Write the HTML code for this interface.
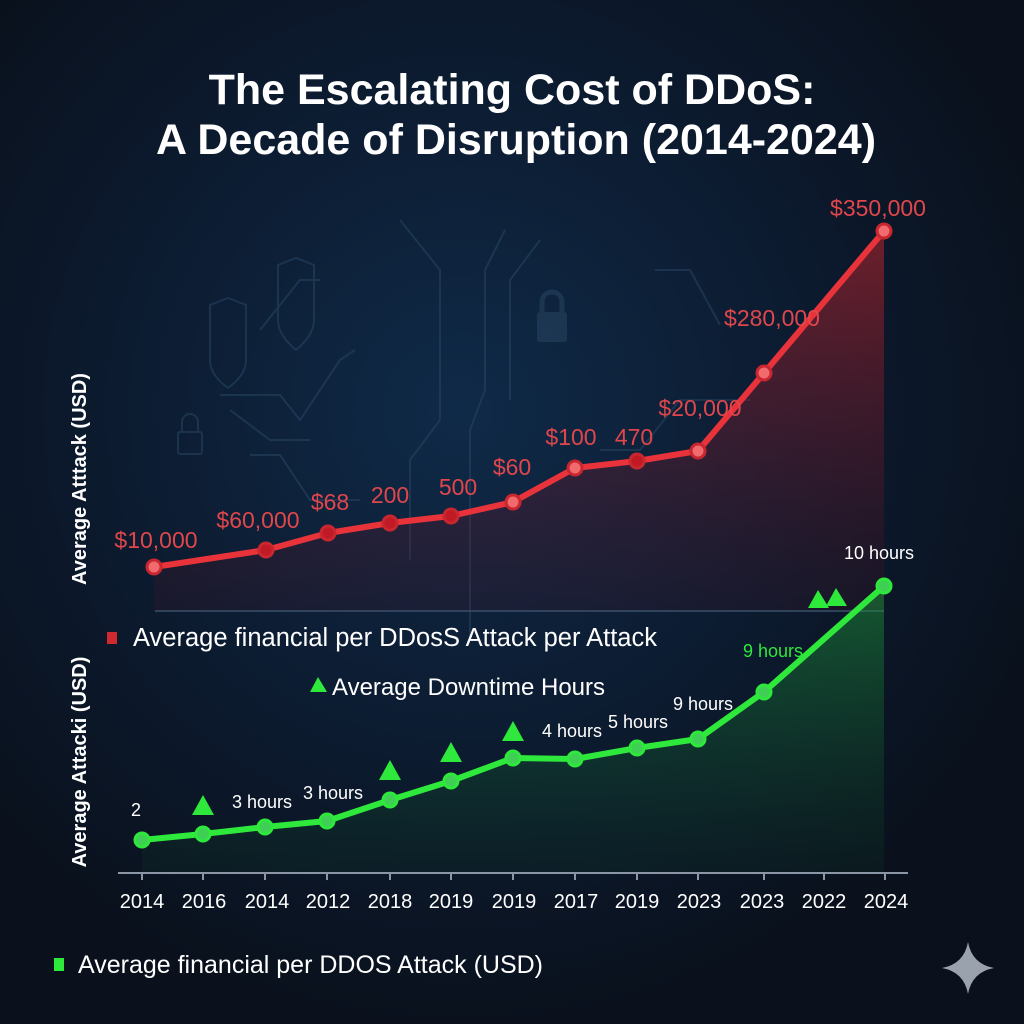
<!DOCTYPE html>
<html><head><meta charset="utf-8"><style>
html,body{margin:0;padding:0;background:#0a1220;}
svg{display:block}
text{font-family:"Liberation Sans",sans-serif}
</style></head><body>
<svg width="1024" height="1024" viewBox="0 0 1024 1024" xmlns="http://www.w3.org/2000/svg">
<defs>
<radialGradient id="bg" cx="0.45" cy="0.4" r="0.6">
<stop offset="0" stop-color="#0f2a48"/><stop offset="0.6" stop-color="#0c1a2e"/><stop offset="1" stop-color="#0a111d"/>
</radialGradient>
<linearGradient id="rf" x1="0" y1="0" x2="0" y2="1"><stop offset="0" stop-color="#c0262e" stop-opacity="0.55"/><stop offset="1" stop-color="#5a1020" stop-opacity="0.15"/></linearGradient>
<linearGradient id="gf" x1="0" y1="0" x2="0" y2="1"><stop offset="0" stop-color="#1f9a3a" stop-opacity="0.5"/><stop offset="1" stop-color="#0d3a24" stop-opacity="0.2"/></linearGradient>
</defs>
<rect width="1024" height="1024" fill="url(#bg)"/>
<g stroke="#2a4866" stroke-width="2" fill="none" opacity="0.5">
<path d="M400 220 L440 270 L440 420 L410 460 L410 560"/><path d="M505 230 L485 270 L485 390 L470 430 L470 640"/><path d="M540 240 L510 280 L510 400"/><path d="M260 330 L300 280 L320 280"/><path d="M220 395 L280 395 L300 420 L340 360 L355 350"/><path d="M230 410 L270 440 L310 440"/><path d="M250 455 L280 455 L310 500 L360 500"/><path d="M655 270 L690 270 L720 325"/><path d="M600 450 L640 450 L680 400 L750 400"/>
<path d="M210 305 L210 360 Q210 375 228 388 Q246 375 246 360 L246 305 L228 298 Z"/><path d="M278 265 L278 320 Q278 335 296 350 Q314 335 314 320 L314 265 L296 258 Z"/>
<rect x="178" y="432" width="24" height="22" rx="2"/><path d="M182 432 V422 a8 8 0 0 1 16 0 V432"/>
</g>
<rect x="537" y="312" width="30" height="30" rx="3" fill="#2a4866" opacity="0.5"/><path d="M542 312 V302 a10 10 0 0 1 20 0 V312" stroke="#2a4866" stroke-width="5" fill="none" opacity="0.5"/>
<text x="512" y="104" fill="#fff" font-size="43" font-weight="bold" text-anchor="middle">The Escalating Cost of DDoS:</text>
<text x="516" y="154" fill="#fff" font-size="43" font-weight="bold" text-anchor="middle">A Decade of Disruption (2014-2024)</text>
<polygon fill="url(#rf)" points="154,567 266,550 328,533 390,523 451,516 513,502 575,468 637,461 698,451 764,373 884,231 884,611 154,611"/>
<line x1="155" y1="611" x2="884" y2="611" stroke="#3a5068" stroke-width="1.5"/>
<polyline fill="none" stroke="#e8333a" stroke-width="6" stroke-linejoin="round" points="154,567 266,550 328,533 390,523 451,516 513,502 575,468 637,461 698,451 764,373 884,231"/>
<g fill="#f06a6e" stroke="#c82730" stroke-width="3">
<circle cx="154" cy="567" r="7"/><circle cx="266" cy="550" r="7" fill="#c01a24"/><circle cx="328" cy="533" r="7" fill="#c01a24"/><circle cx="390" cy="523" r="7" fill="#c01a24"/><circle cx="451" cy="516" r="7" fill="#c01a24"/><circle cx="513" cy="502" r="7"/><circle cx="575" cy="468" r="7"/><circle cx="637" cy="461" r="7" fill="#c01a24"/><circle cx="698" cy="451" r="7"/><circle cx="764" cy="373" r="7"/><circle cx="884" cy="231" r="7"/>
</g>
<g fill="#e0464c" font-size="23" text-anchor="middle">
<text x="156" y="548">$10,000</text><text x="258" y="528">$60,000</text><text x="330" y="510">$68</text><text x="390" y="503">200</text><text x="458" y="495">500</text><text x="512" y="475">$60</text><text x="571" y="445">$100</text><text x="634" y="445">470</text><text x="700" y="416">$20,000</text><text x="772" y="326">$280,000</text><text x="878" y="216">$350,000</text>
</g>
<polygon fill="url(#gf)" points="142,840 203,834 265,827 327,821 390,800 451,781 513,758 575,759 637,748 698,739 764,692 884,586 884,873 142,873"/>
<line x1="118" y1="873" x2="908" y2="873" stroke="#8a96a6" stroke-width="2"/>
<g stroke="#8a96a6" stroke-width="2"><line x1="142" y1="873" x2="142" y2="880"/><line x1="203" y1="873" x2="203" y2="880"/><line x1="265" y1="873" x2="265" y2="880"/><line x1="327" y1="873" x2="327" y2="880"/><line x1="390" y1="873" x2="390" y2="880"/><line x1="451" y1="873" x2="451" y2="880"/><line x1="513" y1="873" x2="513" y2="880"/><line x1="575" y1="873" x2="575" y2="880"/><line x1="637" y1="873" x2="637" y2="880"/><line x1="698" y1="873" x2="698" y2="880"/><line x1="764" y1="873" x2="764" y2="880"/><line x1="824" y1="873" x2="824" y2="880"/><line x1="885" y1="873" x2="885" y2="880"/></g>
<polyline fill="none" stroke="#2ee83c" stroke-width="6" stroke-linejoin="round" points="142,840 203,834 265,827 327,821 390,800 451,781 513,758 575,759 637,748 698,739 764,692 884,586"/>
<g fill="#3fcf55" stroke="#2ee83c" stroke-width="3">
<circle cx="142" cy="840" r="7"/><circle cx="203" cy="834" r="7"/><circle cx="265" cy="827" r="7"/><circle cx="327" cy="821" r="7"/><circle cx="390" cy="800" r="7"/><circle cx="451" cy="781" r="7"/><circle cx="513" cy="758" r="7"/><circle cx="575" cy="759" r="7"/><circle cx="637" cy="748" r="7"/><circle cx="698" cy="739" r="7"/><circle cx="764" cy="692" r="7"/><circle cx="884" cy="586" r="7"/>
</g>
<g fill="#2ee83c">
<polygon points="203,795 192,815 214,815"/><polygon points="390,760 379,780 401,780"/><polygon points="451,742 440,762 462,762"/><polygon points="513,721 502,741 524,741"/><polygon points="818,590 808,608 829,608"/><polygon points="836,588 826,606 847,606"/>
</g>
<g fill="#fff" font-size="18" text-anchor="middle">
<text x="136" y="816">2</text><text x="262" y="808">3 hours</text><text x="333" y="799">3 hours</text><text x="572" y="737">4 hours</text><text x="638" y="728">5 hours</text><text x="703" y="710">9 hours</text><text x="879" y="559">10 hours</text>
</g>
<text x="773" y="657" fill="#2ee83c" font-size="18" text-anchor="middle">9 hours</text>
<g fill="#fff" font-size="20" text-anchor="middle">
<text x="142" y="908">2014</text><text x="204" y="908">2016</text><text x="267" y="908">2014</text><text x="328" y="908">2012</text><text x="390" y="908">2018</text><text x="451" y="908">2019</text><text x="514" y="908">2019</text><text x="576" y="908">2017</text><text x="637" y="908">2019</text><text x="699" y="908">2023</text><text x="762" y="908">2023</text><text x="824" y="908">2022</text><text x="886" y="908">2024</text>
</g>
<rect x="107" y="632" width="10" height="12" fill="#d02a30"/>
<text x="133" y="646" fill="#fff" font-size="25.5">Average financial per DDosS Attack per Attack</text>
<polygon points="318,677 310,692 327,692" fill="#2ee83c"/>
<text x="332" y="695" fill="#fff" font-size="24">Average Downtime Hours</text>
<rect x="54" y="958" width="10" height="13" fill="#2ee83c"/>
<text x="78" y="973" fill="#fff" font-size="25">Average financial per DDOS Attack (USD)</text>
<text transform="translate(86,479) rotate(-90)" fill="#fff" font-size="20" font-weight="bold" text-anchor="middle">Average Atttack (USD)</text>
<text transform="translate(86,762) rotate(-90)" fill="#fff" font-size="20" font-weight="bold" text-anchor="middle">Average Attacki (USD)</text>
<path d="M968 942 Q972 964 994 968 Q972 972 968 994 Q964 972 942 968 Q964 964 968 942 Z" fill="#9aa2ad"/>
</svg>
</body></html>
